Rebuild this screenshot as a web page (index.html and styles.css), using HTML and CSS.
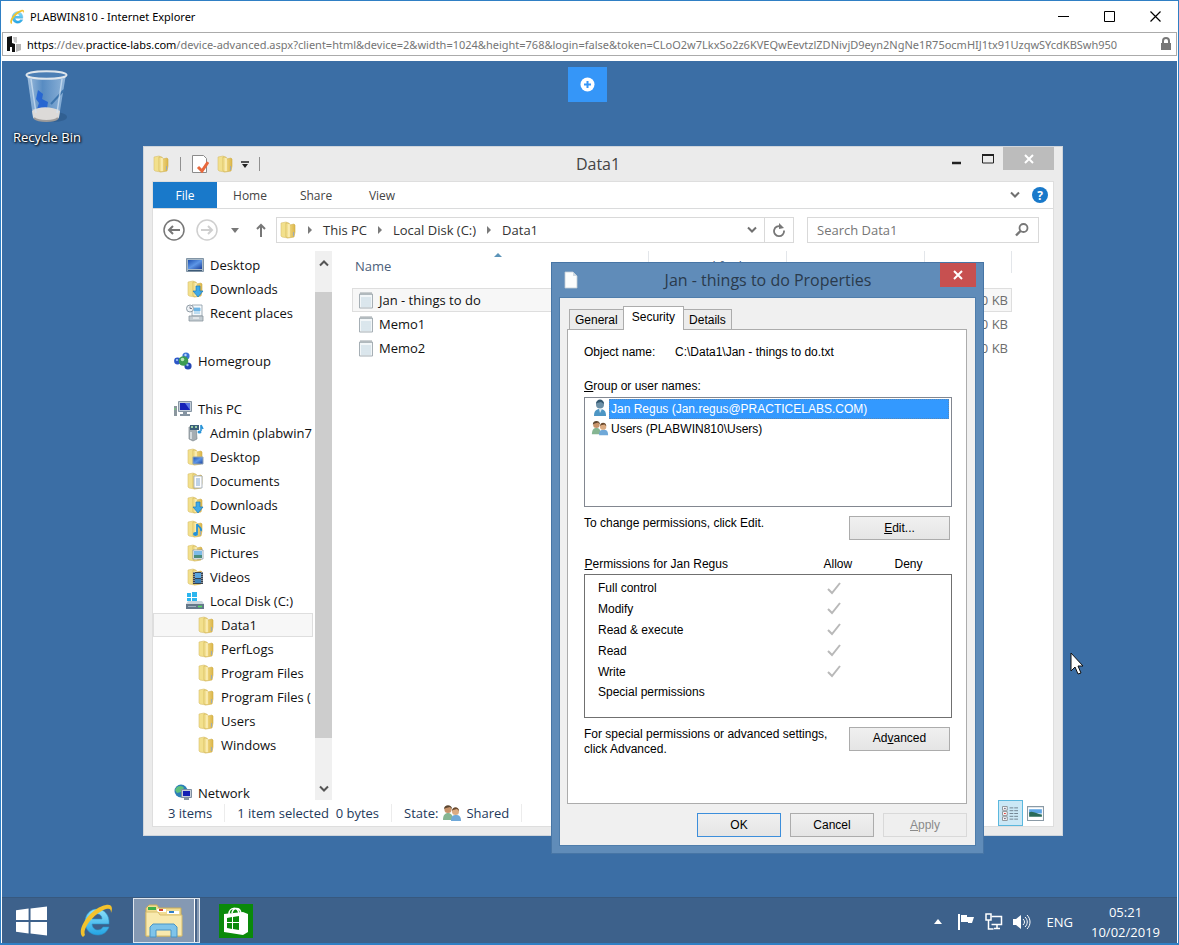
FILE: index.html
```html
<!DOCTYPE html>
<html lang="en">
<head>
    <meta charset="UTF-8">
    <meta name="viewport" content="width=device-width, initial-scale=1.0">
    <title>PLABWIN810 - Internet Explorer</title>
    <link rel="stylesheet" href="styles.css">
</head>
<body>
    <!-- icon sprite -->
    <svg class="sprite" aria-hidden="true">
        <defs>
            <linearGradient id="gFolder" x1="0" x2="1" y1="0" y2="0">
                <stop offset="0" stop-color="#f8e9a0"/><stop offset="1" stop-color="#dcb548"/>
            </linearGradient>
            <linearGradient id="gScreen" x1="0" x2="1" y1="0" y2="1">
                <stop offset="0" stop-color="#1c4fb0"/><stop offset=".5" stop-color="#5d96e6"/><stop offset="1" stop-color="#1a3f9a"/>
            </linearGradient>
            <linearGradient id="gIe" x1="0" x2="0" y1="0" y2="1">
                <stop offset="0" stop-color="#8fe0fb"/><stop offset="1" stop-color="#22a4e4"/>
            </linearGradient>
            <linearGradient id="gBin" x1="0" x2="1" y1="0" y2="0">
                <stop offset="0" stop-color="#b9d3ec"/><stop offset=".4" stop-color="#5f93c9"/><stop offset="1" stop-color="#a5c6e6"/>
            </linearGradient>
        </defs>
        <symbol id="folder" viewBox="0 0 18 18">
            <path d="M2 2l5-1 2 1v15l-6-1-1-1z" fill="#f2e08c" stroke="#d9c070" stroke-width=".6"/>
            <path d="M7 2h3l1 2 4-1 1 1v7l-1 5-6 1-2-1z" fill="url(#gFolder)" stroke="#cfae4c" stroke-width=".6"/>
            <path d="M10 3v13" stroke="#fff6cc" stroke-width="1.2"/>
            <path d="M14.500 11v4" stroke="#9dabb4" stroke-width="1"/>
        </symbol>
        <symbol id="folder-down" viewBox="0 0 18 18">
            <use href="#folder"/>
            <path d="M10 6h4v5h3l-5 6-5-6h3z" fill="#3fa9e8" stroke="#1b78b8" stroke-width=".7"/>
        </symbol>
        <symbol id="folder-desk" viewBox="0 0 18 18">
            <use href="#folder"/>
            <path d="M7 9h10v7H7z" fill="url(#gScreen)" stroke="#8fa3b8"/>
        </symbol>
        <symbol id="folder-doc" viewBox="0 0 18 18">
            <use href="#folder"/>
            <path d="M8 4h8v12H8z" fill="#fdfdfd" stroke="#9aa5ae" stroke-width=".8"/>
            <path d="M10 7h4M10 9h4M10 11h4M10 13h4" stroke="#6f9ccc" stroke-width=".9"/>
        </symbol>
        <symbol id="folder-music" viewBox="0 0 18 18">
            <use href="#folder"/>
            <path d="M11 4v9M11 4c1 3 5 3 4 7" fill="none" stroke="#2291d8" stroke-width="1.8"/>
            <ellipse cx="9.500" cy="14" rx="2.500" ry="2" fill="#2291d8"/>
        </symbol>
        <symbol id="folder-pic" viewBox="0 0 18 18">
            <use href="#folder"/>
            <path d="M7 6h10v9H7z" fill="#fff" stroke="#8b9aa8" stroke-width=".8"/>
            <path d="M8 7h8v4H8z" fill="#7dbbe8"/><path d="M8 11h8v3H8z" fill="#4b8d7c"/>
        </symbol>
        <symbol id="folder-video" viewBox="0 0 18 18">
            <use href="#folder"/>
            <path d="M7 4h10v12H7z" fill="#38424e"/><path d="M9 5h6v5H9z" fill="#5aa6e0"/><path d="M9 11h6v4H9z" fill="#3c82b8"/>
            <path d="M8 4v12M16 4v12" stroke="#e5eaee" stroke-width=".9" stroke-dasharray="1 1"/>
        </symbol>
        <symbol id="monitor" viewBox="0 0 18 18">
            <path d="M.500 2.500h17v13H.500z" fill="#a9bac8" stroke="#8295a6"/>
            <path d="M2 4h14v9H2z" fill="url(#gScreen)"/>
            <path d="M2 14.500h14" stroke="#3d5a78"/>
        </symbol>
        <symbol id="recent" viewBox="0 0 18 18">
            <path d="M6 1h10v11H6z" fill="#f4f8fb" stroke="#8a9aa6" stroke-width=".8"/>
            <path d="M8 4h6v3H8zM8 9h6" fill="#6db4e4" stroke="#6db4e4" stroke-width=".8"/>
            <path d="M3 12h14v5H3z" fill="#c3ccd2" stroke="#88949d" stroke-width=".8"/>
            <path d="M7 14h6" stroke="#fff"/>
            <circle cx="4" cy="4.500" r="3.500" fill="#eef2f5" stroke="#8f9ba5"/><path d="M4 2.500v2h2" fill="none" stroke="#667" stroke-width=".8"/>
        </symbol>
        <symbol id="homegroup" viewBox="0 0 18 18">
            <circle cx="3.500" cy="9" r="3.400" fill="#2d57c8"/><circle cx="12" cy="4" r="3.600" fill="#3a74d6"/>
            <circle cx="14" cy="14" r="3.600" fill="#2547b4"/><circle cx="9.500" cy="9" r="4.800" fill="#3c9c52"/>
            <circle cx="8.500" cy="7.500" r="1.800" fill="#b5e6b5"/><circle cx="11.500" cy="3" r="1.200" fill="#bcd8fa"/>
            <circle cx="13.500" cy="13" r="1.200" fill="#9cc0f4"/><circle cx="3" cy="8" r="1.100" fill="#a8c8f8"/>
        </symbol>
        <symbol id="pc" viewBox="0 0 18 18">
            <path d="M0 6h3v10H0z" fill="#8b979f"/><path d="M1 8v2" stroke="#6fdc6f"/>
            <path d="M4.500 1.500h13v10h-13z" fill="#c2cdd8" stroke="#8594a2"/><path d="M6 3h10v7H6z" fill="#1522b8"/>
            <path d="M11 3h5v7z" fill="#5a78e4"/><path d="M9 12h4v2h3v2H6v-2h3z" fill="#8594a2"/>
        </symbol>
        <symbol id="media" viewBox="0 0 18 18">
            <path d="M3 3l7-1 1 13-4 2-4-2z" fill="#a5adb2" stroke="#7c868c" stroke-width=".7"/>
            <path d="M4 1h9v5H4z" fill="#3b5f7a"/><path d="M5 2h2v2H5zM9 2h2v2H9z" fill="#9cd0a4"/>
            <path d="M15 1v6M15 1l2 4" stroke="#2a94d8" stroke-width="1.600"/><ellipse cx="13.500" cy="8" rx="2" ry="1.500" fill="#2a94d8"/>
            <path d="M5 8v7" stroke="#e9edef" stroke-width="1.400"/>
        </symbol>
        <symbol id="drive" viewBox="0 0 18 18">
            <path d="M1 1h4v4H1zM6 0h5v5H6zM1 6h4v3H1zM6 6h5v3H6z" fill="#2bb5ee"/>
            <path d="M2 9h14l2 3H0z" fill="#ccd6de"/><path d="M0 12h18v5H0z" fill="#65788a"/>
            <path d="M2 14.500h8" stroke="#a2b2c0"/><path d="M12 14.500h4" stroke="#52e060" stroke-width="1.500"/>
        </symbol>
        <symbol id="network" viewBox="0 0 18 18">
            <circle cx="7" cy="7" r="6.500" fill="#2b7fb8"/><path d="M3 3c3-2 6-1 7 1l-3 4-4 1-2-3z" fill="#5fc07c"/>
            <path d="M7.500 5.500h10v8h-10z" fill="#c4ceda" stroke="#7f8fa0"/><path d="M9 7h7v5H9z" fill="#1420b4"/>
            <path d="M10 14h5v2h-5z" fill="#8594a2"/>
        </symbol>
        <symbol id="notepad" viewBox="0 0 18 18">
            <path d="M2.500 3h13v14h-13z" fill="#f2f6f8" stroke="#a6afb5"/>
            <path d="M4 7h10M4 9h10M4 11h10M4 13h10M4 15h10" stroke="#bdd3df" stroke-width=".9"/>
            <path d="M4 1v3M6 1v3M8 1v3M10 1v3M12 1v3M14 1v3" stroke="#8f989e" stroke-width=".9"/>
        </symbol>
        <symbol id="page" viewBox="0 0 14 18">
            <path d="M1 1h8l4 4v12H1z" fill="#fcfdfd" stroke="#c3cdd4" stroke-width=".8"/><path d="M9 1v4h4z" fill="#cfdae2"/>
        </symbol>
        <symbol id="users" viewBox="0 0 20 18">
            <path d="M1 16c0-5 2-7 5-7s5 2 5 7z" fill="#86b592"/><circle cx="6" cy="5.500" r="3.600" fill="#c7936a"/>
            <path d="M2 5c0-5 8-5 8 0L8 3 4 4z" fill="#5b4630"/>
            <path d="M9 17c0-5 2-6 5-6s5 1 5 6z" fill="#6fa8d8"/><circle cx="13.500" cy="7.500" r="3.500" fill="#dbab82"/>
            <path d="M10 7c0-5 7-5 7 0l-2-2-4 1z" fill="#6b4a2e"/>
        </symbol>
        <symbol id="user" viewBox="0 0 18 18">
            <path d="M3 17c0-5 2-7 6-7s6 2 6 7z" fill="#4d96c4"/><circle cx="9" cy="5.500" r="4" fill="#6c8fa6"/>
            <path d="M5 5c0-6 8-6 8 0l-3-2-4 1z" fill="#34576f"/><path d="M8 10l1 4 2-4z" fill="#dbeaf4"/>
        </symbol>
        <symbol id="ie" viewBox="0 0 36 36">
            <path d="M31 21H14c.5 4 3 6 6 6 2 0 4-1 5-3h6c-2 5-6 8-11 8C12 32 7 26 7 19S12 6 19 6s13 6 12 15zM14 16h10c0-3-2-5-5-5s-5 2-5 5z" fill="url(#gIe)" stroke="#2a93cc" stroke-width=".6"/>
            <path d="M5 34C-3 28 12 5 28 2c6-1 7 3 5 8 0-4-1-5-5-4C16 10 4 26 7 32z" fill="#f3c22d"/>
        </symbol>
        <symbol id="arrow-sep" viewBox="0 0 6 10"><path d="M1 1l4 4-4 4z" fill="#7a7a7a"/></symbol>
        <symbol id="tick" viewBox="0 0 14 13"><path d="M1 7l4 4 8-10" fill="none" stroke="#b9b9b9" stroke-width="2"/></symbol>
        <symbol id="chev-down" viewBox="0 0 10 8"><path d="M1 1.500l4 4 4-4" fill="none" stroke="currentColor" stroke-width="2"/></symbol>
        <symbol id="chev-up" viewBox="0 0 10 8"><path d="M1 6.500l4-4 4 4" fill="none" stroke="currentColor" stroke-width="2"/></symbol>
        <symbol id="cross" viewBox="0 0 10 10"><path d="M1 1l8 8M9 1l-8 8" fill="none" stroke="currentColor" stroke-width="2"/></symbol>
    </svg>

    <div class="browser">
        <header class="browser-title">
            <svg class="ie-small"><use href="#ie"/></svg>
            <h1>PLABWIN810 - Internet Explorer</h1>
            <div class="browser-buttons">
                <button type="button" aria-label="Minimize"><svg viewBox="0 0 11 11"><path d="M0 5.500h11" stroke="#000"/></svg></button>
                <button type="button" aria-label="Maximize"><svg viewBox="0 0 11 11"><path d="M.500.500h10v10H.500z" fill="none" stroke="#000"/></svg></button>
                <button type="button" aria-label="Close"><svg viewBox="0 0 11 11"><path d="M.500.500l10 10M10.500.500l-10 10" stroke="#000" stroke-width="1.200"/></svg></button>
            </div>
        </header>
        <div class="url-bar">
            <svg class="favicon" viewBox="0 0 14 16"><path d="M0 1l5-1v7l3 1v8H5v-5H3v4H0z" fill="#111"/><path d="M6 1h4v6l-3-1z" fill="#c9c9c9"/><path d="M9 8h5v6l-5 2z" fill="#b5b5b5"/></svg>
            <p class="url"><b>https</b>://dev.<b>practice-labs.com</b>/device-advanced.aspx?client=html&amp;device=2&amp;width=1024&amp;height=768&amp;login=false&amp;token=CLoO2w7LkxSo2z6KVEQwEevtzlZDNivjD9eyn2NgNe1R75ocmHIJ1tx91UzqwSYcdKBSwh950</p>
            <svg class="lock" viewBox="0 0 12 14"><path d="M3 7V4a3 3 0 0 1 6 0v3" fill="none" stroke="#777" stroke-width="2"/><path d="M1 6h10v7H1z" fill="#777"/></svg>
        </div>

        <main class="desktop">
            <a href="#" class="shortcut">
                <svg class="bin" viewBox="0 0 46 54">
                    <ellipse cx="30" cy="47" rx="13" ry="5" fill="#2c5785" opacity=".6"/>
                    <path d="M3 4l6 43c1 5 25 5 26 0l7-43z" fill="url(#gBin)" opacity=".8"/>
                    <path d="M14 20l5 4-1 5 6 3-1 6-5 4-5-3 2-6-3-4z" fill="#1f5fd4" opacity=".85"/>
                    <path d="M40 20L27 34" stroke="#3d75ad" stroke-width="2"/>
                    <path d="M8 41c6-5 20-5 28 0l-1 6c-1 5-25 5-26 0z" fill="#dcdad8"/>
                    <path d="M10 48c5 4 20 4 24 0" fill="none" stroke="#9d9b9a" stroke-width="2"/>
                    <path d="M7 9l5 34M38 9l-5 34" stroke="#d4e5f5" stroke-width="1.500" opacity=".7"/>
                    <ellipse cx="22.500" cy="5" rx="20" ry="3.800" fill="#4c7fb5" stroke="#dfe6ec" stroke-width="2"/>
                </svg>
                <span>Recycle Bin</span>
            </a>
            <button type="button" class="lab-menu" aria-label="Open lab menu">
                <svg viewBox="0 0 15 15"><circle cx="7.500" cy="7.500" r="7" fill="#fff"/><path d="M7.500 4v7M4 7.500h7" stroke="#3596f8" stroke-width="2"/></svg>
            </button>

            <!-- Explorer window -->
            <section class="window explorer">
                <header class="explorer-title">
                    <div class="quick-bar">
                        <svg class="icon"><use href="#folder"/></svg>
                        <i class="bar-sep"></i>
                        <svg class="icon" viewBox="0 0 18 18"><path d="M1.500.500h11l3 3v14h-14z" fill="#fff" stroke="#8b8b8b"/><path d="M7 12l4 4 6-9" fill="none" stroke="#e8683c" stroke-width="3"/></svg>
                        <svg class="icon"><use href="#folder"/></svg>
                        <svg class="caret" viewBox="0 0 8 7"><path d="M0 1h8" stroke="#222" stroke-width="1.500"/><path d="M1 3h6l-3 4z" fill="#222"/></svg>
                        <i class="bar-sep"></i>
                    </div>
                    <h2>Data1</h2>
                    <div class="window-buttons">
                        <button type="button" aria-label="Minimize"><svg viewBox="0 0 12 12"><path d="M1 10h9" stroke="#222" stroke-width="2.500"/></svg></button>
                        <button type="button" aria-label="Maximize"><svg viewBox="0 0 12 12"><path d="M.500 2h11v8H.500z" fill="none" stroke="#222"/><path d="M0 2h12" stroke="#222" stroke-width="2"/></svg></button>
                        <button type="button" class="close-grey" aria-label="Close"><svg><use href="#cross"/></svg></button>
                    </div>
                </header>
                <div class="explorer-body">
                    <nav class="ribbon">
                        <button type="button" class="file-tab">File</button>
                        <button type="button">Home</button>
                        <button type="button">Share</button>
                        <button type="button">View</button>
                        <button type="button" class="ribbon-toggle" aria-label="Expand the ribbon"><svg class="chev"><use href="#chev-down"/></svg></button>
                        <button type="button" class="help" aria-label="Help">?</button>
                    </nav>
                    <div class="address-row">
                        <button type="button" class="nav-btn" aria-label="Back"><svg viewBox="0 0 22 22"><circle cx="11" cy="11" r="10" fill="none" stroke="#777" stroke-width="1.500"/><path d="M6 11h11M10 7l-4 4 4 4" fill="none" stroke="#777" stroke-width="2"/></svg></button>
                        <button type="button" class="nav-btn" aria-label="Forward"><svg viewBox="0 0 22 22"><circle cx="11" cy="11" r="10" fill="none" stroke="#cfcfcf" stroke-width="1.500"/><path d="M5 11h11M12 7l4 4-4 4" fill="none" stroke="#cfcfcf" stroke-width="2"/></svg></button>
                        <button type="button" class="nav-recent" aria-label="Recent locations"><svg viewBox="0 0 8 5"><path d="M0 0h8L4 5z" fill="#777"/></svg></button>
                        <button type="button" class="nav-up" aria-label="Up"><svg viewBox="0 0 12 14"><path d="M6 14V2M2 6l4-4 4 4" fill="none" stroke="#777" stroke-width="2"/></svg></button>
                        <div class="crumbs">
                            <svg class="icon"><use href="#folder"/></svg>
                            <svg class="sep"><use href="#arrow-sep"/></svg><a href="#">This PC</a>
                            <svg class="sep"><use href="#arrow-sep"/></svg><a href="#">Local Disk (C:)</a>
                            <svg class="sep"><use href="#arrow-sep"/></svg><a href="#">Data1</a>
                            <button type="button" class="crumb-drop" aria-label="Previous locations"><svg class="chev"><use href="#chev-down"/></svg></button>
                            <button type="button" class="refresh" aria-label="Refresh"><svg viewBox="0 0 14 14"><path d="M9 3.500a5 5 0 1 0 3 4" fill="none" stroke="#777" stroke-width="1.800"/><path d="M7 0v6l5-1z" fill="#777"/></svg></button>
                        </div>
                        <div class="search">
                            <input type="text" placeholder="Search Data1" aria-label="Search Data1">
                            <svg viewBox="0 0 14 14"><circle cx="8.500" cy="5" r="4" fill="none" stroke="#777" stroke-width="1.800"/><path d="M5.500 8L1 12.500" stroke="#777" stroke-width="2.400"/></svg>
                        </div>
                    </div>

                    <div class="panes">
                        <div class="tree-pane">
                            <ul class="tree">
                                <li class="lvl2"><svg class="icon"><use href="#monitor"/></svg>Desktop</li>
                                <li class="lvl2"><svg class="icon"><use href="#folder-down"/></svg>Downloads</li>
                                <li class="lvl2"><svg class="icon"><use href="#recent"/></svg>Recent places</li>
                                <li class="lvl1"><svg class="icon"><use href="#homegroup"/></svg>Homegroup</li>
                                <li class="lvl1"><svg class="icon"><use href="#pc"/></svg>This PC</li>
                                <li class="lvl2"><svg class="icon"><use href="#media"/></svg>Admin (plabwin7</li>
                                <li class="lvl2"><svg class="icon"><use href="#folder-desk"/></svg>Desktop</li>
                                <li class="lvl2"><svg class="icon"><use href="#folder-doc"/></svg>Documents</li>
                                <li class="lvl2"><svg class="icon"><use href="#folder-down"/></svg>Downloads</li>
                                <li class="lvl2"><svg class="icon"><use href="#folder-music"/></svg>Music</li>
                                <li class="lvl2"><svg class="icon"><use href="#folder-pic"/></svg>Pictures</li>
                                <li class="lvl2"><svg class="icon"><use href="#folder-video"/></svg>Videos</li>
                                <li class="lvl2"><svg class="icon"><use href="#drive"/></svg>Local Disk (C:)</li>
                                <li class="lvl3 current"><svg class="icon"><use href="#folder"/></svg>Data1</li>
                                <li class="lvl3"><svg class="icon"><use href="#folder"/></svg>PerfLogs</li>
                                <li class="lvl3"><svg class="icon"><use href="#folder"/></svg>Program Files</li>
                                <li class="lvl3"><svg class="icon"><use href="#folder"/></svg>Program Files (</li>
                                <li class="lvl3"><svg class="icon"><use href="#folder"/></svg>Users</li>
                                <li class="lvl3"><svg class="icon"><use href="#folder"/></svg>Windows</li>
                                <li class="lvl1"><svg class="icon"><use href="#network"/></svg>Network</li>
                            </ul>
                            <div class="scrollbar">
                                <svg class="chev"><use href="#chev-up"/></svg>
                                <div class="thumb"></div>
                                <svg class="chev"><use href="#chev-down"/></svg>
                            </div>
                        </div>
                        <div class="files-pane">
                            <table class="files">
                                <thead>
                                    <tr>
                                        <th class="col-name"><span>Name<svg class="sort" viewBox="0 0 8 4"><path d="M0 4l4-4 4 4z" fill="#5b93b8"/></svg></span></th>
                                        <th class="col-date"><span>Date modified</span></th>
                                        <th class="col-type"><span>Type</span></th>
                                        <th class="col-size"><span>Size</span></th>
                                    </tr>
                                </thead>
                                <tbody>
                                    <tr class="current"><td><svg class="icon"><use href="#notepad"/></svg>Jan - things to do</td><td></td><td></td><td class="size">0 KB</td></tr>
                                    <tr><td><svg class="icon"><use href="#notepad"/></svg>Memo1</td><td></td><td></td><td class="size">0 KB</td></tr>
                                    <tr><td><svg class="icon"><use href="#notepad"/></svg>Memo2</td><td></td><td></td><td class="size">0 KB</td></tr>
                                </tbody>
                            </table>
                        </div>
                    </div>

                    <footer class="status">
                        <span class="stat">3 items</span>
                        <span class="stat">1 item selected&nbsp; 0 bytes</span>
                        <span class="stat">State:<svg class="icon"><use href="#users"/></svg>Shared</span>
                        <div class="view-buttons">
                            <button type="button" class="on" aria-label="Details view"><svg viewBox="0 0 18 16"><path d="M.500.500h5v4h-5zM.500 6h5v4h-5zM.500 11.500h5v4h-5z" fill="#fff" stroke="#8a8f93"/><path d="M2 2.500h2M2 13.500h2" stroke="#557"/><path d="M2 8h2" stroke="#d33"/><path d="M8 2h4M13 2h4M8 5h4M13 5h4M8 8h4M13 8h4M8 11h4M13 11h4M8 14h4M13 14h4" stroke="#6d7f8d"/></svg></button>
                            <button type="button" aria-label="Large icons view"><svg viewBox="0 0 16 14"><path d="M.500.500h15v13H.500z" fill="#fff" stroke="#8a9aa6"/><path d="M2 3h12v4H2z" fill="#5ca4e4"/><path d="M2 6c4-2 7 2 12 2v2H2z" fill="#2a6a58"/></svg></button>
                        </div>
                    </footer>
                </div>
            </section>

            <!-- Properties dialog -->
            <section class="window dialog">
                <header class="dialog-title">
                    <svg class="doc"><use href="#page"/></svg>
                    <h2>Jan - things to do Properties</h2>
                    <button type="button" class="close-red" aria-label="Close"><svg><use href="#cross"/></svg></button>
                </header>
                <div class="dialog-body">
                    <div class="tabs">
                        <button type="button">General</button>
                        <button type="button" class="active">Security</button>
                        <button type="button">Details</button>
                    </div>
                    <div class="tab-page">
                        <p class="object"><span>Object name:</span>C:\Data1\Jan - things to do.txt</p>
                        <p class="list-label"><u>G</u>roup or user names:</p>
                        <ul class="principals">
                            <li class="selected"><svg class="icon"><use href="#user"/></svg><span>Jan Regus (Jan.regus@PRACTICELABS.COM)</span></li>
                            <li><svg class="icon"><use href="#users"/></svg><span>Users (PLABWIN810\Users)</span></li>
                        </ul>
                        <div class="hint">
                            <p>To change permissions, click Edit.</p>
                            <button type="button" class="btn wide"><u>E</u>dit...</button>
                        </div>
                        <table class="perms">
                            <thead>
                                <tr><th><u>P</u>ermissions for Jan Regus</th><th class="allow">Allow</th><th class="deny">Deny</th></tr>
                            </thead>
                            <tbody>
                                <tr><td>Full control</td><td class="allow"><svg><use href="#tick"/></svg></td><td></td></tr>
                                <tr><td>Modify</td><td class="allow"><svg><use href="#tick"/></svg></td><td></td></tr>
                                <tr><td>Read &amp; execute</td><td class="allow"><svg><use href="#tick"/></svg></td><td></td></tr>
                                <tr><td>Read</td><td class="allow"><svg><use href="#tick"/></svg></td><td></td></tr>
                                <tr><td>Write</td><td class="allow"><svg><use href="#tick"/></svg></td><td></td></tr>
                                <tr><td>Special permissions</td><td></td><td></td></tr>
                            </tbody>
                        </table>
                        <div class="hint">
                            <p>For special permissions or advanced settings,<br>click Advanced.</p>
                            <button type="button" class="btn wide">Ad<u>v</u>anced</button>
                        </div>
                    </div>
                    <div class="dialog-buttons">
                        <button type="button" class="btn default">OK</button>
                        <button type="button" class="btn">Cancel</button>
                        <button type="button" class="btn" disabled><u>A</u>pply</button>
                    </div>
                </div>
            </section>

            <svg class="cursor" viewBox="0 0 14 24"><path d="M1 1v18l4-4 3 7 3-1-3-7h5z" fill="#fff" stroke="#111"/></svg>
        </main>

        <footer class="taskbar">
            <button type="button" class="task" aria-label="Start"><svg class="start" viewBox="0 0 32 30"><path d="M0 4l13-2v12H0zM15 2l17-2v14H15zM0 16h13v12L0 26zM15 16h17v14l-17-2z" fill="#fff"/></svg></button>
            <button type="button" class="task" aria-label="Internet Explorer"><svg class="big"><use href="#ie"/></svg></button>
            <button type="button" class="task running" aria-label="File Explorer">
                <svg class="big" viewBox="0 0 38 34">
                    <path d="M1 4l3-3h8l2 3h22v28H1z" fill="#f1dd93" stroke="#c9ac58"/>
                    <path d="M3 3h8v3H3z" fill="#3fae49"/><path d="M12 5h9v3h-9z" fill="#fff"/><path d="M14 5h4v2h-4z" fill="#d2452f"/>
                    <path d="M22 7h12v3H22z" fill="#fff"/><path d="M24 7h5v2h-5z" fill="#2f7fc8"/>
                    <path d="M1 8h12l2 3h22v21H1z" fill="#f8e9ae" stroke="#d8bd6c"/>
                    <path d="M5 33V23l3-3h21l3 3v10h-6v-7H11v7z" fill="#7fc4ea" stroke="#4b94c4"/>
                </svg>
            </button>
            <button type="button" class="task" aria-label="Store">
                <svg class="store" viewBox="0 0 34 34"><path d="M0 0h34v34H0z" fill="#0a8a0a"/><path d="M10 10c0-7 9-8 10 0M13 9c1-6 8-6 9 0" fill="none" stroke="#fff" stroke-width="1.500"/><path d="M5 10l19-2 5 2v18l-5 3-19-3z" fill="#fff"/><path d="M8 14l5-1v5H8zM14 13l6-1v6h-6zM8 19h5v6l-5-1zM14 19h6v7l-6-1z" fill="#0a8a0a"/></svg>
            </button>
            <div class="tray">
                <svg class="tray-up" viewBox="0 0 8 5"><path d="M0 5l4-5 4 5z" fill="#fff"/></svg>
                <svg viewBox="0 0 18 18"><path d="M2 1v16" stroke="#fff" stroke-width="2"/><path d="M4 2h6v2h7l-2 6h-4V9H4z" fill="#fff"/></svg>
                <svg viewBox="0 0 18 18"><path d="M6.500 3.500h10v8h-10M9 15.500h6M12 12v3M3.500 7v9h5" fill="none" stroke="#fff" stroke-width="1.500"/><path d="M1 1h5v6H1z" fill="none" stroke="#fff" stroke-width="1.500"/></svg>
                <svg viewBox="0 0 18 18"><path d="M0 6h3l5-4v14l-5-4H0z" fill="#fff"/><path d="M10 6c2 2 2 4 0 6M12 4c3 3 3 7 0 10M14 2c4 4 4 10 0 14" fill="none" stroke="#fff"/></svg>
                <span class="lang">ENG</span>
                <p class="clock">05:21<br>10/02/2019</p>
            </div>
        </footer>
    </div>
</body>
</html>
```

FILE: styles.css
```css
* {
    box-sizing: border-box;
}
body {
    margin: 0;
    font-family: "Open Sans", "Noto Sans", sans-serif;
    font-size: 13px;
    color: #111;
}
h1, h2, p, ul {
    margin: 0;
    padding: 0;
    font-weight: normal;
}
ul {
    list-style: none;
}
button {
    padding: 0;
    border: none;
    background: none;
    font: inherit;
    color: inherit;
    display: flex;
    align-items: center;
    justify-content: center;
}
a {
    color: inherit;
    text-decoration: none;
}
svg {
    display: block;
    flex: none;
}
.sprite {
    position: absolute;
    width: 0;
    height: 0;
}
.icon {
    width: 18px;
    height: 18px;
}
.chev {
    width: 10px;
    height: 8px;
    color: #707070;
}

/* browser */
.browser {
    display: flex;
    flex-direction: column;
    min-height: 100vh;
    background: #fff;
    border: 1px solid #2f7fc4;
    border-bottom-width: 2px;
}
.browser-title {
    display: flex;
    align-items: center;
    height: 31px;
    padding-left: 8px;
}
.ie-small {
    width: 16px;
    height: 16px;
    margin-right: 5px;
}
.browser-title h1 {
    flex: 1;
    font-family: "Noto Sans", sans-serif;
    font-size: 11px;
    color: #000;
}
.browser-buttons {
    display: flex;
}
.browser-buttons button {
    width: 46px;
    height: 28px;
}
.browser-buttons svg {
    width: 11px;
    height: 11px;
}
.url-bar {
    display: flex;
    align-items: center;
    height: 24px;
    margin: 0 1px 5px;
    padding: 0 4px;
    border: 1px solid #ababab;
}
.favicon {
    width: 14px;
    height: 16px;
    margin-right: 6px;
}
.url {
    flex: 1;
    min-width: 0;
    overflow: hidden;
    white-space: nowrap;
    font-family: "Noto Sans", sans-serif;
    font-size: 11px;
    color: #757575;
}
.url b {
    font-weight: normal;
    color: #000;
}
.lock {
    width: 12px;
    height: 14px;
    margin-left: 6px;
}

/* desktop */
.desktop {
    position: relative;
    flex: 1;
    margin: 0 1px;
    background: #3b6ea5;
    overflow: hidden;
}
.shortcut {
    display: flex;
    flex-direction: column;
    align-items: center;
    width: 90px;
    padding-top: 9px;
    color: #fff;
    text-shadow: 1px 1px 2px #000, 0 0 3px #000;
}
.bin {
    width: 46px;
    height: 54px;
    margin-bottom: 4px;
}
.lab-menu {
    position: absolute;
    top: 6px;
    left: calc(50% - 22px);
    width: 39px;
    height: 35px;
    background: #3596f8;
}
.lab-menu svg {
    width: 15px;
    height: 15px;
}
.window {
    position: absolute;
    display: flex;
    flex-direction: column;
}
.cursor {
    position: absolute;
    left: 1068px;
    top: 591px;
    width: 14px;
    height: 24px;
}

/* explorer */
.explorer {
    left: 141px;
    top: 85px;
    width: 920px;
    height: 690px;
    padding: 0 8px 8px;
    background: #ebebeb;
    border: 1px solid #cfd5dc;
}
.explorer-title {
    display: grid;
    grid-template-columns: 1fr auto 1fr;
    height: 34px;
}
.explorer-title h2 {
    align-self: center;
    padding-right: 10px;
    font-size: 16px;
    color: #444;
}
.quick-bar {
    display: flex;
    align-items: center;
    gap: 7px;
}
.bar-sep {
    width: 1px;
    height: 14px;
    margin: 0 3px;
    background: #909090;
}
.caret {
    width: 8px;
    height: 7px;
}
.window-buttons {
    display: flex;
    justify-content: flex-end;
}
.window-buttons button {
    width: 31px;
    height: 23px;
}
.window-buttons svg {
    width: 12px;
    height: 12px;
}
.window-buttons .close-grey {
    width: 51px;
    background: #bcbcbc;
    color: #fff;
}
.window-buttons .close-grey svg, .close-red svg {
    width: 10px;
    height: 10px;
}
.explorer-body {
    flex: 1;
    display: flex;
    flex-direction: column;
    min-height: 0;
    background: #fff;
    border: 1px solid #dedede;
}
.ribbon {
    display: flex;
    height: 27px;
    border-bottom: 1px solid #dadbdc;
    font-size: 12px;
    color: #444;
}
.ribbon button {
    width: 66px;
}
.ribbon .file-tab {
    width: 64px;
    background: #1979ca;
    color: #fff;
}
.ribbon .ribbon-toggle {
    width: 20px;
    margin-left: auto;
}
.ribbon .help {
    align-self: center;
    width: 16px;
    height: 16px;
    margin: 0 5px 0 7px;
    border-radius: 50%;
    background: #1979ca;
    color: #fff;
    font-weight: bold;
}
.address-row {
    display: flex;
    align-items: center;
    height: 42px;
    padding: 0 14px 0 10px;
    color: #333;
}
.nav-btn {
    margin-right: 11px;
}
.nav-btn svg {
    width: 22px;
    height: 22px;
}
.nav-recent {
    width: 12px;
    margin-right: 4px;
}
.nav-recent svg {
    width: 8px;
    height: 5px;
}
.nav-up {
    width: 31px;
}
.nav-up svg {
    width: 12px;
    height: 14px;
}
.crumbs {
    flex: 1;
    display: flex;
    align-items: center;
    height: 26px;
    padding-left: 2px;
    border: 1px solid #d9d9d9;
}
.sep {
    width: 6px;
    height: 10px;
    margin: 0 10px;
}
.crumb-drop {
    width: 24px;
    margin-left: auto;
}
.refresh {
    align-self: stretch;
    width: 29px;
    border-left: 1px solid #d9d9d9;
}
.refresh svg {
    width: 14px;
    height: 14px;
}
.search {
    display: flex;
    align-items: center;
    width: 232px;
    height: 26px;
    margin-left: 13px;
    padding: 0 9px;
    border: 1px solid #d9d9d9;
}
.search input {
    flex: 1;
    min-width: 0;
    padding: 0;
    border: none;
    outline: none;
    font: inherit;
}
.search input::placeholder {
    color: #767676;
}
.search svg {
    width: 14px;
    height: 14px;
}
.panes {
    flex: 1;
    display: flex;
    min-height: 0;
}
.tree-pane {
    display: flex;
    width: 179px;
}
.tree {
    flex: 1;
    min-width: 0;
    margin-right: 2px;
    padding-top: 2px;
}
.tree li {
    display: flex;
    align-items: center;
    gap: 6px;
    height: 24px;
    white-space: nowrap;
    border: 1px solid transparent;
}
.tree .lvl1 {
    margin-top: 24px;
    padding-left: 20px;
}
.tree .lvl2 {
    padding-left: 32px;
}
.tree .lvl3 {
    padding-left: 43px;
}
.tree .current {
    background: #f7f7f7;
    border-color: #dedede;
}
.scrollbar {
    display: flex;
    flex-direction: column;
    align-items: center;
    gap: 8px;
    width: 17px;
    padding: 8px 0 7px;
    background: #f0f0f0;
}
.scrollbar .thumb {
    flex: 1;
    width: 17px;
    margin: 17px 0 39px;
    background: #cdcdcd;
}
.scrollbar .chev {
    color: #555;
}
.files-pane {
    flex: 1;
    padding-left: 20px;
}
.files {
    width: 660px;
    border-collapse: collapse;
    table-layout: fixed;
}
.files th {
    height: 37px;
    padding: 0;
    vertical-align: top;
    text-align: left;
    font-weight: normal;
    color: #4c607a;
}
.files th span {
    position: relative;
    display: block;
    height: 22px;
    padding: 6px 0 0 7px;
    line-height: 18px;
    border-right: 1px solid #e3e6ea;
}
.files .col-name span {
    padding-left: 3px;
}
.col-name {
    width: 297px;
}
.col-date, .col-type {
    width: 138px;
}
.sort {
    position: absolute;
    top: 2px;
    left: 48%;
    width: 8px;
    height: 4px;
}
.files td {
    height: 24px;
    padding: 0;
    line-height: 18px;
    white-space: nowrap;
}
.files td .icon {
    display: inline-block;
    margin: 0 4px 0 5px;
    vertical-align: top;
}
.files .size {
    padding-right: 4px;
    text-align: right;
    color: #6d6d6d;
}
.files .current {
    background: #f7f7f7;
    outline: 1px solid #dedede;
    outline-offset: -1px;
}
.status {
    display: flex;
    align-items: center;
    height: 26px;
    padding-left: 3px;
    color: #1e395b;
}
.stat {
    display: flex;
    align-items: center;
    gap: 4px;
    padding: 0 12px;
    border-right: 1px solid #ececec;
}
.stat .icon {
    width: 20px;
}
.view-buttons {
    display: flex;
    margin-left: auto;
    margin-right: 5px;
}
.view-buttons button {
    width: 25px;
    height: 26px;
    border: 1px solid transparent;
}
.view-buttons .on {
    background: #cbe8f6;
    border-color: #5bb8de;
}
.view-buttons svg {
    width: 17px;
    height: 15px;
}

/* properties dialog */
.dialog {
    left: 549px;
    top: 201px;
    width: 433px;
    height: 592px;
    padding: 0 7px 7px;
    background: #608cb9;
    border: 1px solid #4775a5;
}
.dialog-title {
    display: flex;
    align-items: center;
    height: 34px;
    padding-left: 5px;
}
.doc {
    width: 14px;
    height: 18px;
}
.dialog-title h2 {
    flex: 1;
    padding-left: 18px;
    text-align: center;
    font-size: 16px;
    color: #2a3a4c;
}
.close-red {
    align-self: flex-start;
    width: 36px;
    height: 24px;
    background: #c75050;
    color: #fff;
}
.dialog-body {
    flex: 1;
    display: flex;
    flex-direction: column;
    padding: 8px 8px 8px 7px;
    background: #f0f0f0;
    border: 1px solid #4f7dab;
    font-family: "Liberation Sans", Arial, sans-serif;
    font-size: 12px;
    color: #000;
}
.tabs {
    display: flex;
    align-items: flex-end;
    padding-left: 2px;
}
.tabs button {
    height: 20px;
    padding: 0 5px;
    background: #ececec;
    border: 1px solid #acacac;
    border-bottom: none;
}
.tabs .active {
    height: 24px;
    margin: 0 -1px -1px;
    padding: 0 8px 3px;
    background: #fff;
    z-index: 1;
}
.tab-page {
    flex: 1;
    padding: 14px 14px 0 16px;
    background: #fff;
    border: 1px solid #acacac;
}
.object {
    line-height: 16px;
}
.object span {
    display: inline-block;
    width: 91px;
}
.list-label {
    margin-top: 18px;
    line-height: 16px;
}
.principals {
    height: 110px;
    margin-top: 3px;
    padding: 1px 2px;
    border: 1px solid #828790;
}
.principals li {
    display: flex;
    height: 20px;
    padding-left: 4px;
}
.principals span {
    flex: 1;
    padding-left: 2px;
    line-height: 20px;
}
.selected span {
    background: #3399ff;
    color: #fff;
    outline: 1px dotted #5a87b5;
    outline-offset: -1px;
}
.hint {
    display: flex;
    justify-content: space-between;
    padding: 9px 2px 0 0;
    line-height: 15px;
}
.btn {
    width: 84px;
    height: 24px;
    background: linear-gradient(#f0f0f0, #e5e5e5);
    border: 1px solid #acacac;
}
.btn.wide {
    width: 101px;
}
.btn.default {
    border-color: #3c8edb;
}
.btn:disabled {
    background: #efefef;
    border-color: #d9d9d9;
    color: #8a8a8a;
}
.perms {
    width: 100%;
    margin-top: 15px;
    border-collapse: collapse;
}
.perms th {
    height: 19px;
    padding: 0;
    text-align: left;
    font-weight: normal;
}
.perms tbody {
    border: 1px solid #707070;
}
.perms td {
    height: 21px;
    padding: 0 0 0 13px;
}
.perms tr:first-child td {
    height: 24px;
    padding-top: 4px;
}
.perms tr:last-child td {
    height: 35px;
    padding-bottom: 14px;
}
.perms .allow {
    width: 71px;
}
.perms .deny {
    width: 57px;
}
.perms td.allow {
    padding-left: 3px;
}
.allow svg {
    width: 14px;
    height: 13px;
}
.dialog-buttons {
    display: flex;
    justify-content: flex-end;
    gap: 9px;
    padding-top: 9px;
}

/* taskbar */
.taskbar {
    display: flex;
    align-items: center;
    height: 46px;
    margin: 0 1px;
    background: #3d618b;
    border-top: 1px solid #37597f;
    color: #fff;
}
.task {
    width: 58px;
    height: 45px;
    margin-right: 7px;
}
.start {
    width: 31px;
    height: 30px;
}
.big {
    width: 38px;
    height: 36px;
}
.task.running {
    width: 67px;
    margin-left: 1px;
    padding-right: 6px;
    background: linear-gradient(90deg, #8599b3 60px, #fff 60px, #fff 61px, #49658a 61px, #49658a 63px, #8599b3 63px);
    border: 1px solid #dfe6ee;
}
.store {
    width: 34px;
    height: 34px;
}
.tray {
    display: flex;
    align-items: center;
    gap: 10px;
    margin-left: auto;
    padding: 2px 17px 0 0;
}
.tray svg {
    width: 18px;
    height: 18px;
}
.tray .tray-up {
    width: 8px;
    height: 5px;
    margin-right: 5px;
}
.lang {
    margin: 0 8px 0 6px;
}
.clock {
    text-align: center;
    line-height: 20px;
}
```
